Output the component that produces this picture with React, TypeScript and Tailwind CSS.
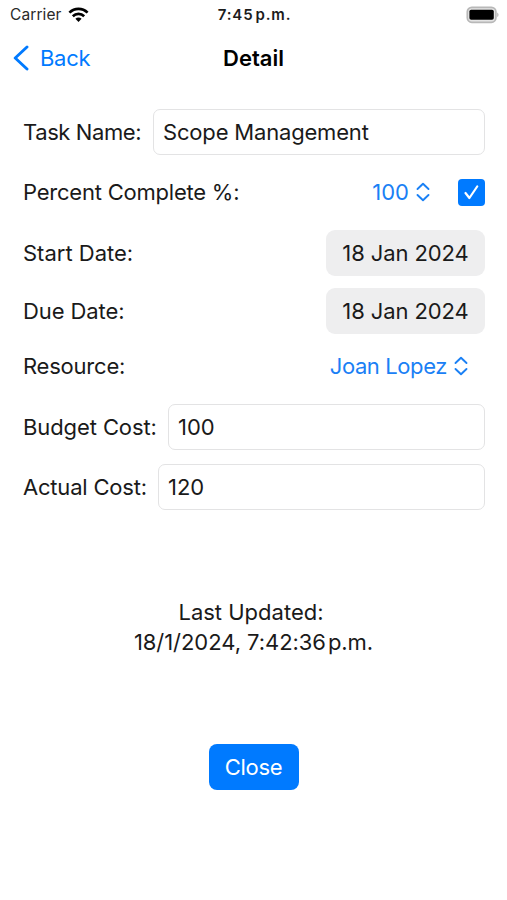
import { useState } from "react";
import type { ReactNode } from "react";

const StatusBar = () => (
  <div className="flex h-[29px] items-center pr-[8px] pl-[10px] text-[15.5px] leading-none">
    <div className="flex flex-1 items-center gap-[6px]">
      <span className="tracking-[0.1px] text-[#2a2a2a]">Carrier</span>
      <svg width="21" height="16" viewBox="0 0 21 16" fill="none" stroke="#000" strokeWidth="2.7">
        <path d="M1.4 5.6C6.6 0.6 14.4 0.6 19.6 5.6" />
        <path d="M4.8 9.2C8 6.2 13 6.2 16.2 9.2" />
        <path d="M10.5 15L7.4 11.8C9.2 10.2 11.8 10.2 13.6 11.8Z" fill="#000" stroke="none" />
      </svg>
    </div>
    <span className="text-[15px] font-semibold tracking-[0.85px] text-[#1c1c1c]">7:45&#8202;p.m.</span>
    <div className="flex flex-1 justify-end">
      <svg width="33" height="18" viewBox="0 0 33 18">
        <rect x="1.3" y="1.3" width="28.6" height="15" rx="4.5" fill="#e4e4e4" stroke="#b8b8b8" strokeWidth="1.7" />
        <rect x="3.4" y="3.8" width="24.4" height="10" rx="1.8" fill="#000" />
        <path d="M31.2 6.5C33 7.3 33 10.3 31.2 11.1Z" fill="#b8b8b8" />
      </svg>
    </div>
  </div>
);

const NavBar = () => (
  <div className="flex h-[57px] items-center px-[13px]">
    <button type="button" className="flex flex-1 items-center gap-[10px] text-[#007aff]">
      <svg width="17" height="26" viewBox="0 0 17 26" fill="none" stroke="currentColor" strokeWidth="2.9" strokeLinecap="round" strokeLinejoin="round">
        <path d="M14 2L2.2 13L14 24" />
      </svg>
      <span className="tracking-[-0.3px]">Back</span>
    </button>
    <h1 className="font-semibold text-black">Detail</h1>
    <div className="flex-1" />
  </div>
);

const UpDown = () => (
  <svg width="14" height="20" viewBox="0 0 14 20" fill="none" stroke="currentColor" strokeWidth="1.9" strokeLinecap="round" strokeLinejoin="round">
    <path d="M1.5 7L7 1.8L12.5 7" />
    <path d="M1.5 13L7 18.2L12.5 13" />
  </svg>
);

const DateButton = ({ children }: { children: ReactNode }) => (
  <button type="button" className="h-[46px] w-[159px] rounded-[9px] bg-[#eeeeef] text-center tracking-[-0.1px]">
    {children}
  </button>
);

const inputClass = "h-[46px] min-w-0 flex-1 rounded-[7px] border border-[#e3e3e4] bg-white px-[9px] outline-none";

export default function App() {
  const [taskName, setTaskName] = useState("Scope Management");
  const [budgetCost, setBudgetCost] = useState("100");
  const [actualCost, setActualCost] = useState("120");
  const [complete, setComplete] = useState(true);

  return (
    <div className="h-[900px] w-[507px] bg-white font-['Inter','Liberation_Sans',sans-serif] text-[22px] leading-[30px] text-[#1a1a1a]">
      <StatusBar />
      <NavBar />

      <div className="flex flex-col pt-[23px] pr-[22px] pl-[23px]">
        <div className="flex items-center">
          <label htmlFor="task" className="w-[130px] tracking-[-0.4px]">Task Name:</label>
          <input id="task" className={`${inputClass} tracking-[-0.18px]`} value={taskName} onChange={(e) => setTaskName(e.target.value)} />
        </div>

        <div className="mt-[22px] flex items-center">
          <span className="flex-1 tracking-[-0.22px]">Percent Complete %:</span>
          <button type="button" className="mr-[28px] flex items-center gap-[7px] text-[#1a80f5]">
            <span>100</span>
            <UpDown />
          </button>
          <button
            type="button"
            onClick={() => setComplete(!complete)}
            className="flex h-[27px] w-[27px] items-center justify-center rounded-[4px] bg-[#007aff]"
          >
            {complete && (
              <svg width="15" height="16" viewBox="0 0 15 16" fill="none" stroke="#fff" strokeWidth="2.2" strokeLinecap="round" strokeLinejoin="round">
                <path d="M1.5 9L5.4 14L13.2 2.5" />
              </svg>
            )}
          </button>
        </div>

        <div className="mt-[23px] flex items-center justify-between">
          <span>Start Date:</span>
          <DateButton>18 Jan 2024</DateButton>
        </div>

        <div className="mt-[12px] flex items-center justify-between">
          <span className="tracking-[-0.1px]">Due Date:</span>
          <DateButton>18 Jan 2024</DateButton>
        </div>

        <div className="mt-[17px] flex items-center justify-between">
          <span className="tracking-[-0.22px]">Resource:</span>
          <button type="button" className="mr-[17px] flex items-center gap-[7px] text-[#1a80f5]">
            <span className="tracking-[-0.4px]">Joan Lopez</span>
            <UpDown />
          </button>
        </div>

        <div className="mt-[23px] flex items-center">
          <label htmlFor="budget" className="w-[145px] tracking-[-0.1px]">Budget Cost:</label>
          <input id="budget" className={inputClass} value={budgetCost} onChange={(e) => setBudgetCost(e.target.value)} />
        </div>

        <div className="mt-[14px] flex items-center">
          <label htmlFor="actual" className="w-[135px] tracking-[-0.2px]">Actual Cost:</label>
          <input id="actual" className={inputClass} value={actualCost} onChange={(e) => setActualCost(e.target.value)} />
        </div>
      </div>

      <div className="mt-[87px] text-center">
        <p className="pr-[5px]">Last Updated:</p>
        <p className="tracking-[-0.05px]">18/1/2024, 7:42:36&#8202;p.m.</p>
      </div>

      <div className="mt-[87px] flex justify-center">
        <button type="button" className="h-[46px] w-[90px] rounded-[8px] bg-[#007aff] tracking-[-0.3px] text-white">Close</button>
      </div>
    </div>
  );
}
